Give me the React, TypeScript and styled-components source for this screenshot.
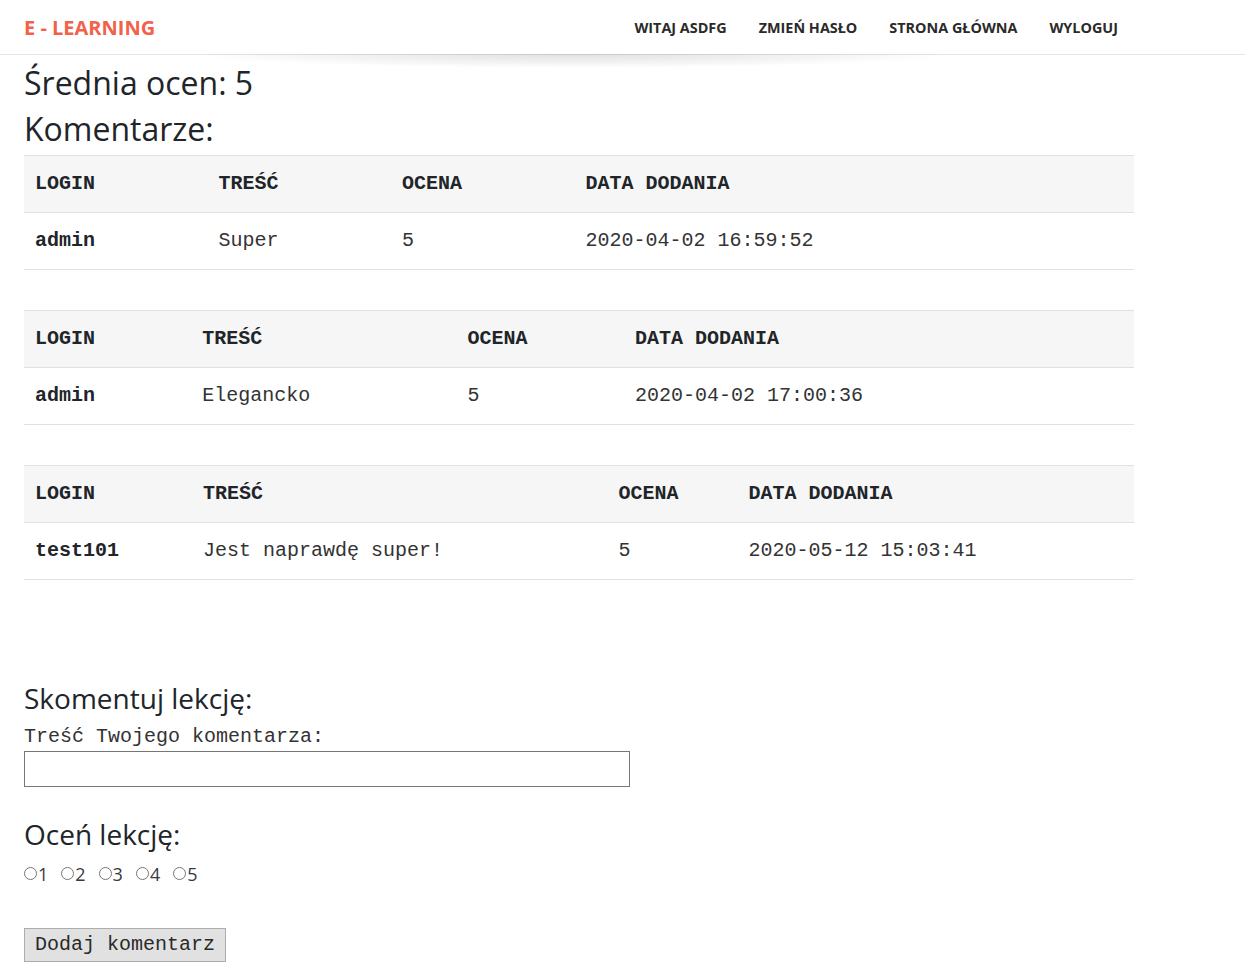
import React from 'react';
import styled, { createGlobalStyle } from 'styled-components';

const GlobalStyle = createGlobalStyle`
  body {
    margin: 0;
    font-family: 'Open Sans', 'Noto Sans', sans-serif;
    color: #212529;
    background: #fff;
  }
`;

const mono = `'Liberation Mono', 'Courier New', monospace`;

const Header = styled.header`
  position: relative;
  height: 54px;
  border-bottom: 1px solid #e4e4e4;
  background: #fff;

  &::after {
    content: '';
    position: absolute;
    top: 100%;
    left: 205px;
    width: 735px;
    height: 14px;
    background: radial-gradient(ellipse 52% 100% at 50% 0%, rgba(0, 0, 0, 0.12), rgba(0, 0, 0, 0.04) 70%, rgba(0, 0, 0, 0) 100%);
    pointer-events: none;
  }
`;

const HeaderBar = styled.div`
  width: 1110px;
  height: 100%;
  margin-left: 24px;
  display: flex;
  align-items: center;
  justify-content: space-between;
`;

const Logo = styled.a`
  font-size: 20px;
  font-weight: 700;
  color: #f1624a;
  text-decoration: none;
`;

const Nav = styled.nav`
  display: flex;
`;

const NavLink = styled.a`
  padding: 0 16px;
  font-size: 14.4px;
  font-weight: 700;
  color: #2a2a2a;
  text-decoration: none;
  text-transform: uppercase;
`;

const Content = styled.main`
  width: 1110px;
  margin-left: 24px;
  padding-top: 9px;
`;

const PageTitle = styled.h2<{ tight?: boolean }>`
  margin: 0 0 ${({ tight }) => (tight ? 6 : 8)}px;
  font-size: 32px;
  font-weight: 400;
  line-height: 1.2;
`;

const SectionTitle = styled.h3<{ gap?: number }>`
  margin: ${({ gap }) => gap ?? 0}px 0 8px;
  font-size: 28px;
  font-weight: 400;
  line-height: 1.2;
`;

const CommentTable = styled.table`
  width: 100%;
  border-collapse: collapse;
  margin-bottom: 40px;
  font-family: ${mono};
  font-size: 20px;
  line-height: 32px;
  border-bottom: 1px solid #dee2e6;

  th,
  td {
    padding: 12px 11px;
    text-align: left;
    border-top: 1px solid #dee2e6;
    white-space: nowrap;
  }

  th {
    background: #f6f6f6;
    font-weight: 700;
    color: #212529;
  }

  td {
    color: #333;
  }
`;

const Login = styled.td`
  font-weight: 700;
  && {
    color: #212529;
  }
`;

const CommentForm = styled.form`
  padding-top: 62px;
`;

const FieldLabel = styled.label`
  display: block;
  font-family: ${mono};
  font-size: 20px;
  line-height: 28px;
  color: #333;
`;

const TextInput = styled.input`
  display: block;
  box-sizing: border-box;
  width: 606px;
  height: 36px;
  margin: 0;
  border: 1px solid #767676;
  font-family: ${mono};
  font-size: 18px;
`;

const RatingRow = styled.div`
  display: flex;
  align-items: center;
  gap: 13px;
  height: 28px;
`;

const RatingOption = styled.label`
  display: flex;
  align-items: center;
  gap: 1px;
  font-size: 18px;
  color: #3a3a3a;
`;

const Radio = styled.input`
  width: 13px;
  height: 13px;
  margin: 0;
`;

const SubmitButton = styled.button`
  display: block;
  margin-top: 40px;
  height: 34px;
  padding: 0 10px;
  border: 1px solid #adadad;
  border-radius: 0;
  background: #e1e1e1;
  font-family: ${mono};
  font-size: 20px;
  color: #2a2a2a;
`;

type Comment = { login: string; text: string; rating: number; date: string };

const comments: Comment[] = [
  { login: 'admin', text: 'Super', rating: 5, date: '2020-04-02 16:59:52' },
  { login: 'admin', text: 'Elegancko', rating: 5, date: '2020-04-02 17:00:36' },
  { login: 'test101', text: 'Jest naprawdę super!', rating: 5, date: '2020-05-12 15:03:41' },
];

export default function App() {
  return (
    <>
      <GlobalStyle />
      <Header>
        <HeaderBar>
          <Logo href="#">E - LEARNING</Logo>
          <Nav>
            <NavLink href="#">Witaj asdfg</NavLink>
            <NavLink href="#">Zmień hasło</NavLink>
            <NavLink href="#">Strona główna</NavLink>
            <NavLink href="#">Wyloguj</NavLink>
          </Nav>
        </HeaderBar>
      </Header>
      <Content>
        <PageTitle>Średnia ocen: 5</PageTitle>
        <PageTitle tight>Komentarze:</PageTitle>
        {comments.map((c, i) => (
          <CommentTable key={i}>
            <thead>
              <tr>
                <th>LOGIN</th>
                <th>TREŚĆ</th>
                <th>OCENA</th>
                <th>DATA DODANIA</th>
              </tr>
            </thead>
            <tbody>
              <tr>
                <Login>{c.login}</Login>
                <td>{c.text}</td>
                <td>{c.rating}</td>
                <td>{c.date}</td>
              </tr>
            </tbody>
          </CommentTable>
        ))}
        <CommentForm onSubmit={(e) => e.preventDefault()}>
          <SectionTitle>Skomentuj lekcję:</SectionTitle>
          <FieldLabel htmlFor="comment">Treść Twojego komentarza:</FieldLabel>
          <TextInput id="comment" type="text" />
          <SectionTitle gap={31}>Oceń lekcję:</SectionTitle>
          <RatingRow>
            {[1, 2, 3, 4, 5].map((n) => (
              <RatingOption key={n}>
                <Radio type="radio" name="rating" value={n} />
                {n}
              </RatingOption>
            ))}
          </RatingRow>
          <SubmitButton type="submit">Dodaj komentarz</SubmitButton>
        </CommentForm>
      </Content>
    </>
  );
}
